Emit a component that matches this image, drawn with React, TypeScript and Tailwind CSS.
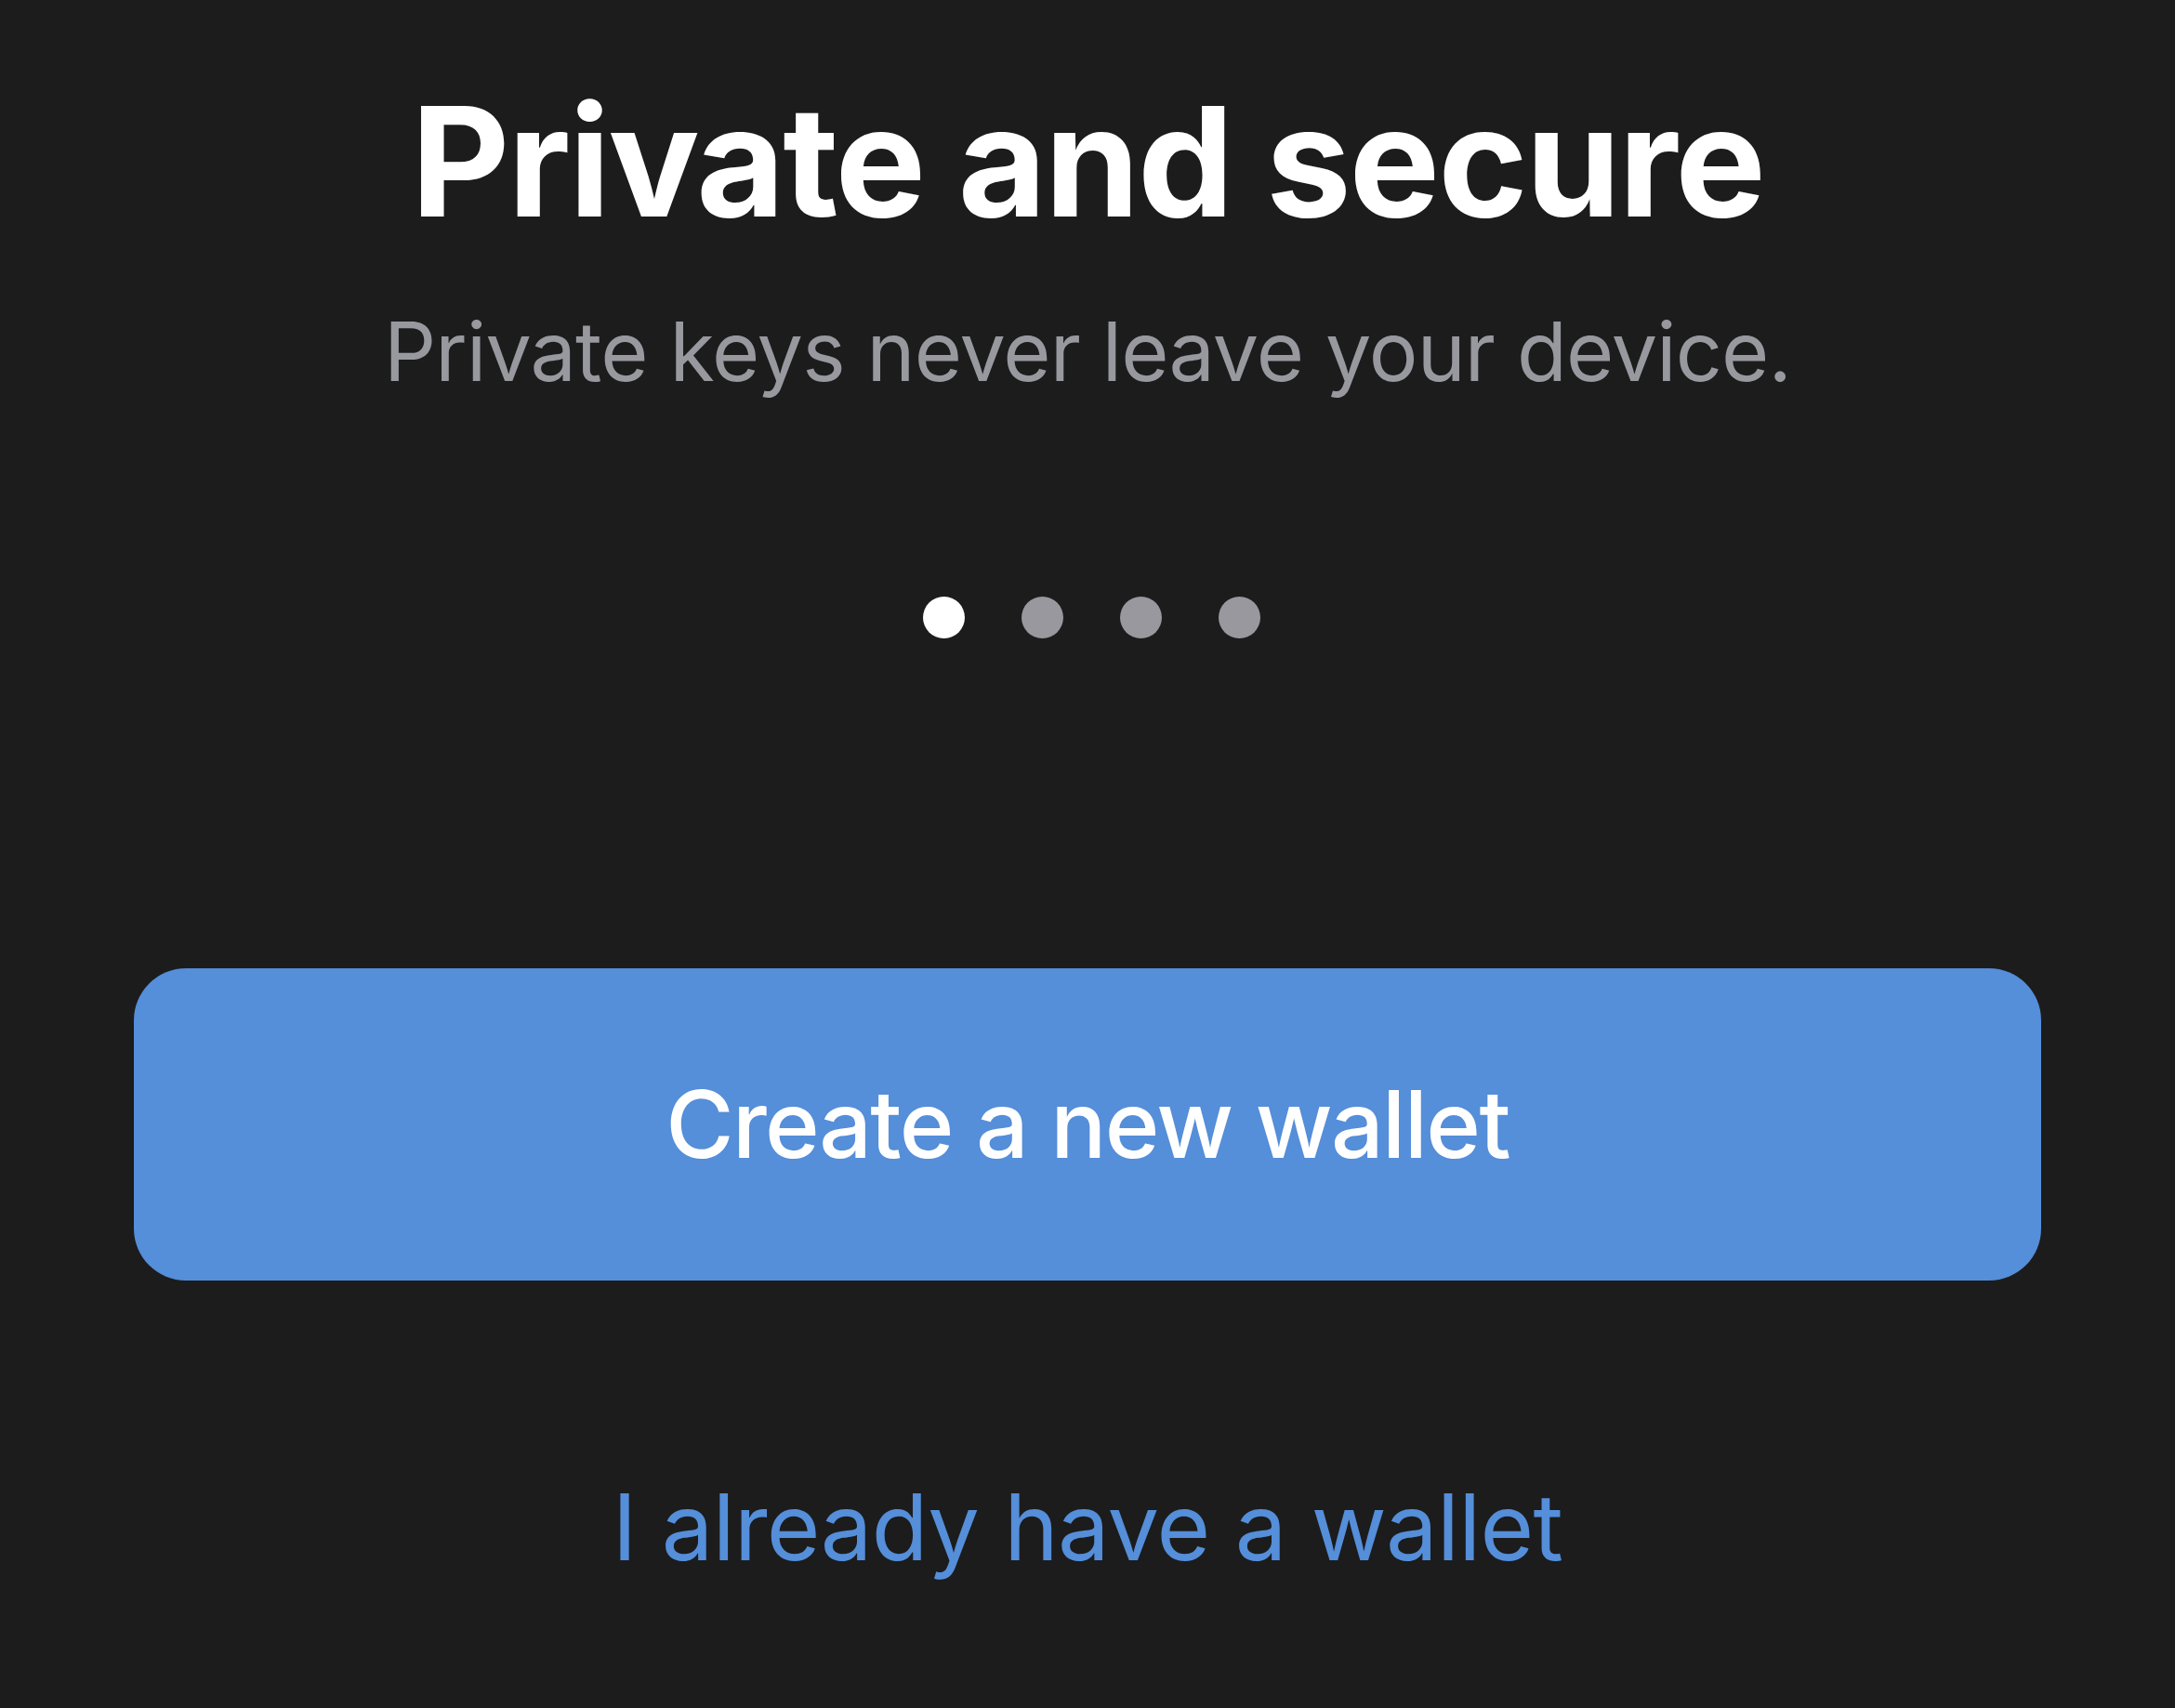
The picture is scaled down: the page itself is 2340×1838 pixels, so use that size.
export default function App() {
  const dots = [true, false, false, false]

  return (
    <div className="min-h-screen w-full bg-[#1c1c1d] flex flex-col items-center px-[144px] pt-[92px] font-['Inter','Liberation_Sans',sans-serif]">
      <h1 className="text-[164px] leading-none font-bold text-white tracking-[-0.013em]">Private and secure</h1>
      <p className="mt-[78px] text-[88px] leading-none text-[#98989f] tracking-[-0.01em]">Private keys never leave your device.</p>

      <div className="mt-[220px] flex gap-[61px] ml-2">
        {dots.map((active, i) => (
          <span key={i} className={`block w-[45px] h-[45px] rounded-full ${active ? 'bg-white' : 'bg-[#99989e]'}`} />
        ))}
      </div>

      <button className="mt-[355px] w-full h-[336px] rounded-[56px] bg-[#558ed9] text-white text-[100px] leading-none font-medium tracking-[-0.016em] flex items-center justify-center">
        Create a new wallet
      </button>

      <a className="mt-[216px] text-[99px] leading-none text-[#558ed9] tracking-[-0.007em] cursor-pointer">I already have a wallet</a>
    </div>
  )
}
